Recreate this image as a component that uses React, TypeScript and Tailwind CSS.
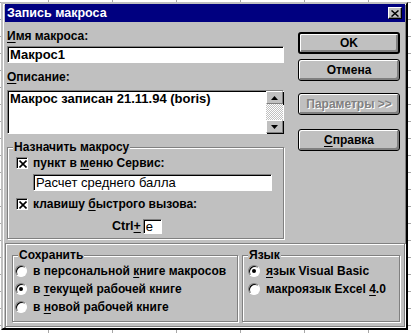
import type { ReactNode } from "react";

const ui = "font-['Liberation_Sans',Arial,sans-serif]";

function Acc({ children }: { children: ReactNode }) {
  return <u className="underline underline-offset-[2px]">{children}</u>;
}

function Field({ className, children }: { className: string; children?: ReactNode }) {
  return (
    <div
      className={`flex border border-t-[#808080] border-l-[#808080] border-b-white border-r-white bg-white shadow-[inset_1px_1px_0_#000] ${className}`}
    >
      {children}
    </div>
  );
}

function Button({ children, main, off }: { children: ReactNode; main?: boolean; off?: boolean }) {
  return (
    <button
      className={`flex h-[22px] w-[102px] items-center justify-center rounded-[3px] border-black bg-[#c0c0c0] text-[12px] font-bold ${
        main ? "border-2" : "border"
      } ${
        off ? "text-[#808080] [text-shadow:1px_1px_0_#fff]" : "text-black"
      } shadow-[inset_1px_1px_0_#fff,inset_-2px_-2px_0_#808080]`}
    >
      {children}
    </button>
  );
}

function Check({ children }: { children: ReactNode }) {
  return (
    <div className="flex h-[14px] items-center gap-[5px]">
      <span className="grid h-[12px] w-[12px] place-items-center border border-t-[#808080] border-l-[#808080] border-b-white border-r-white bg-white shadow-[inset_1px_1px_0_#000]">
        <svg width="8" height="8" viewBox="0 0 8 8" className="ml-[1px] mt-[1px]">
          <path d="M0.5 0.5 L7.5 7.5 M7.5 0.5 L0.5 7.5" stroke="#000" strokeWidth="1.6" />
        </svg>
      </span>
      <span className="text-[12px] font-bold leading-[14px]">{children}</span>
    </div>
  );
}

function Radio({ children, on }: { children: ReactNode; on?: boolean }) {
  return (
    <div className="flex h-[14px] items-center gap-[6px]">
      <span className="grid h-[12px] w-[12px] place-items-center rounded-full border border-t-[#808080] border-l-[#808080] border-b-white border-r-white bg-white shadow-[inset_1px_1px_0_#000]">
        {on && <span className="h-[4px] w-[4px] rounded-full bg-black" />}
      </span>
      <span className="text-[12px] font-bold leading-[14px]">{children}</span>
    </div>
  );
}

function Group({ title, className, children }: { title: ReactNode; className: string; children: ReactNode }) {
  return (
    <fieldset
      className={`border border-[#808080] shadow-[1px_1px_0_#fff,inset_1px_1px_0_#fff] ${className}`}
    >
      <legend className="ml-[5px] bg-[#c0c0c0] px-[1px] text-[12px] font-bold leading-[14px]">
        {title}
      </legend>
      {children}
    </fieldset>
  );
}

function Arrow({ up }: { up?: boolean }) {
  return (
    <div className="grid h-[13px] place-items-center border border-t-white border-l-white border-b-[#808080] border-r-[#808080] bg-[#c0c0c0] shadow-[1px_1px_0_#000]">
      <svg width="7" height="4" viewBox="0 0 7 4">
        <path d={up ? "M3.5 0 L7 4 L0 4 Z" : "M0 0 L7 0 L3.5 4 Z"} fill="#000" />
      </svg>
    </div>
  );
}

export default function App() {
  return (
    <div
      className={`h-[333px] w-[411px] overflow-hidden bg-white bg-[linear-gradient(90deg,#a8a8a8_1px,transparent_1px),linear-gradient(#a8a8a8_1px,transparent_1px)] bg-[size:64px_17px] bg-[position:48px_2px] pl-[1px] pt-[2px] text-black ${ui}`}
    >
      <div className="flex h-[328px] w-[407px] flex-col border-2 border-t-[#c0c0c0] border-l-[#c0c0c0] border-b-black border-r-black bg-[#c0c0c0] shadow-[inset_1px_1px_0_#fff,inset_-1px_-1px_0_#808080]">
        <div className="ml-[2px] mr-[1px] flex h-[18px] items-center justify-between bg-[#000080] pl-[2px] pr-[3px]">
          <span className="text-[12.5px] font-bold text-white">Запись макроса</span>
          <span className="grid h-[12px] w-[14px] place-items-center border border-t-white border-l-white border-b-black border-r-black bg-[#c0c0c0] shadow-[inset_-1px_-1px_0_#808080]">
            <svg width="8" height="7" viewBox="0 0 8 7">
              <path d="M0.5 0.5 L7.5 6.5 M7.5 0.5 L0.5 6.5" stroke="#000" strokeWidth="1.5" />
            </svg>
          </span>
        </div>

        <div className="flex pl-[4px]">
          <div className="flex w-[277px] flex-col">
            <div className="mt-[7px] h-[14px] text-[12px] font-bold leading-[14px]">
              <Acc>И</Acc>мя макроса:
            </div>
            <Field className="mt-[3px] h-[17px] items-center pl-[2px] text-[13px] font-bold">Макрос1</Field>

            <div className="mt-[7px] h-[14px] text-[12px] font-bold leading-[14px]">
              <Acc>О</Acc>писание:
            </div>
            <Field className="mt-[6px] h-[44px]">
              <div className="flex-1 pl-[2px] pt-[1px] text-[13px] font-bold leading-[14px]">
                Макрос записан 21.11.94 (boris)
              </div>
              <div className="flex w-[17px] flex-col">
                <Arrow up />
                <div className="flex-1 bg-[repeating-conic-gradient(#c0c0c0_0%_25%,#ffffff_0%_50%)] bg-[length:2px_2px]" />
                <Arrow />
              </div>
            </Field>

            <Group title="Назначить макросу" className="mt-[6px] h-[99px] w-[277px]">
              <div className="flex flex-col pl-[8px]">
                <div className="mt-[2px]">
                  <Check>
                    пункт в <Acc>м</Acc>еню Сервис:
                  </Check>
                </div>
                <Field className="ml-[17px] mt-[4px] h-[17px] w-[239px] items-center pl-[2px] text-[13px]">
                  Расчет среднего балла
                </Field>
                <div className="mt-[6px]">
                  <Check>
                    клавишу <Acc>б</Acc>ыстрого вызова:
                  </Check>
                </div>
                <div className="ml-[96px] mt-[6px] flex items-center gap-[2px]">
                  <span className="text-[12.5px] font-bold">
                    Ctrl<Acc>+</Acc>
                  </span>
                  <Field className="h-[15px] w-[19px] items-center pl-[2px] text-[13px]">e</Field>
                </div>
              </div>
            </Group>
          </div>

          <div className="ml-[14px] flex flex-col">
            <div className="mt-[10px]">
              <Button main>OK</Button>
            </div>
            <div className="mt-[5px]">
              <Button>Отмена</Button>
            </div>
            <div className="mt-[12px]">
              <Button off>Параметры &gt;&gt;</Button>
            </div>
            <div className="mt-[14px]">
              <Button>
                <span>
                  <Acc>С</Acc>правка
                </span>
              </Button>
            </div>
          </div>
        </div>

        <div className="ml-[2px] mt-[4px] flex h-[84px] w-[400px] gap-[4px] border border-[#808080] pl-[6px] pt-[4px] shadow-[1px_1px_0_#fff,inset_1px_1px_0_#fff]">
          <Group title="Сохранить" className="h-[74px] w-[226px]">
            <div className="mt-[2px] flex flex-col gap-[4px] pl-[2px]">
              <Radio>
                в персональной <Acc>к</Acc>ниге макросов
              </Radio>
              <Radio on>
                в <Acc>т</Acc>екущей рабочей книге
              </Radio>
              <Radio>
                в <Acc>н</Acc>овой рабочей книге
              </Radio>
            </div>
          </Group>
          <Group title="Язык" className="h-[74px] w-[158px]">
            <div className="mt-[2px] flex flex-col gap-[4px] pl-[5px]">
              <Radio on>
                <Acc>я</Acc>зык Visual Basic
              </Radio>
              <Radio>
                макроязык Excel <Acc>4</Acc>.0
              </Radio>
            </div>
          </Group>
        </div>
      </div>
    </div>
  );
}
